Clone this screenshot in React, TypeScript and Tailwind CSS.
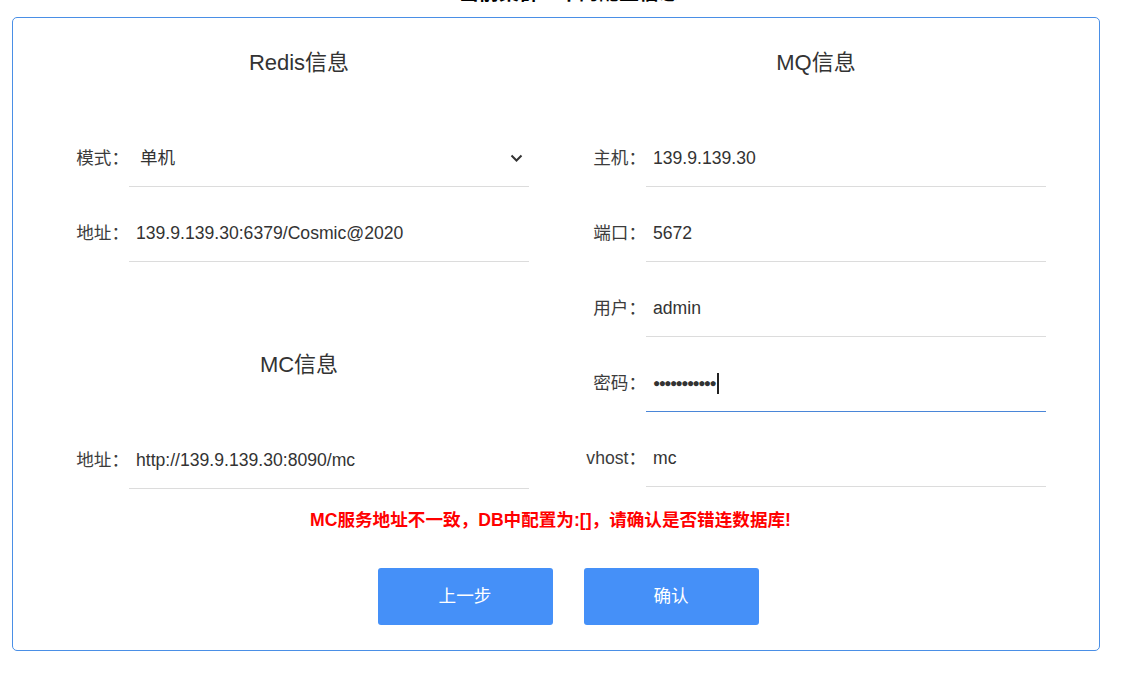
import React from "react";

const FONT = { fontFamily: '"Liberation Sans", "Noto Sans CJK SC", sans-serif' };

function Field({ label, value, kind }: { label: string; value: string; kind?: "select" | "password" }) {
  const focused = kind === "password";
  return (
    <div className="flex items-start h-[57px] mb-[18px]">
      <div className="w-[60px] h-[56px] flex items-center justify-end text-[17.6px] text-[#3c3c3c] whitespace-nowrap">
        {label}
      </div>
      <div
        className={
          "w-[400px] h-[57px] border-b flex items-center text-[17.6px] text-[#333] " +
          (focused ? "border-[#4a86d8]" : "border-[#dcdcdc]") +
          (kind === "select" ? " pl-[11px] pr-[6px] justify-between" : " pl-[7px]")
        }
      >
        {kind === "password" ? (
          <span className="flex items-center">
            <span className="tracking-[-1.6px] text-[12px] text-[#333]">{"●●●●●●●●●●●"}</span>
            <span className="inline-block w-[2px] h-[21px] bg-[#222] ml-[2px]" />
          </span>
        ) : (
          <span>{value}</span>
        )}
        {kind === "select" && (
          <svg width="13" height="8" viewBox="0 0 13 8">
            <path d="M1.5 1.5 L6.5 6.5 L11.5 1.5" fill="none" stroke="#333" strokeWidth="2" />
          </svg>
        )}
      </div>
    </div>
  );
}

function Heading({ children }: { children: React.ReactNode }) {
  return <div className="h-[30px] leading-[30px] text-center text-[22px] text-[#333]">{children}</div>;
}

export default function App() {
  return (
    <div className="w-[1132px] h-[698px] bg-white overflow-hidden" style={FONT}>
      <div className="h-[17px] flex justify-center items-end overflow-hidden">
        <div className="text-[20px] leading-[20px] font-bold text-black mb-[14px] pl-[6px] whitespace-nowrap">
          当前集群—中的配置信息
        </div>
      </div>
      <div className="ml-[12px] w-[1088px] h-[634px] border border-[#4a8fe6] rounded-[5px] pt-[30px]">
        <div className="flex pl-[56px] gap-[57px]">
          <div className="w-[460px]">
            <Heading>Redis信息</Heading>
            <div className="mt-[52px]">
              <Field label="模式：" value="单机" kind="select" />
              <Field label="地址：" value="139.9.139.30:6379/Cosmic@2020" />
            </div>
            <div className="mt-[88px]">
              <Heading>MC信息</Heading>
            </div>
            <div className="mt-[52px]">
              <Field label="地址：" value="http://139.9.139.30:8090/mc" />
            </div>
          </div>
          <div className="w-[460px]">
            <Heading>MQ信息</Heading>
            <div className="mt-[52px]">
              <Field label="主机：" value="139.9.139.30" />
              <Field label="端口：" value="5672" />
              <Field label="用户：" value="admin" />
              <Field label="密码：" value="" kind="password" />
              <Field label="vhost：" value="mc" />
            </div>
          </div>
        </div>
        <div className="flex justify-center pr-[11px]">
          <div className="h-[26px] leading-[26px] text-[17.6px] font-bold text-[#ff0000] whitespace-nowrap">
            MC服务地址不一致，DB中配置为:[]，请确认是否错连数据库!
          </div>
        </div>
        <div className="mt-[35px] flex justify-center pl-[24px] gap-[31px]">
          <button className="w-[175px] h-[57px] rounded-[3px] bg-[#4590f8] text-white text-[17.6px]">上一步</button>
          <button className="w-[175px] h-[57px] rounded-[3px] bg-[#4590f8] text-white text-[17.6px]">确认</button>
        </div>
      </div>
    </div>
  );
}
